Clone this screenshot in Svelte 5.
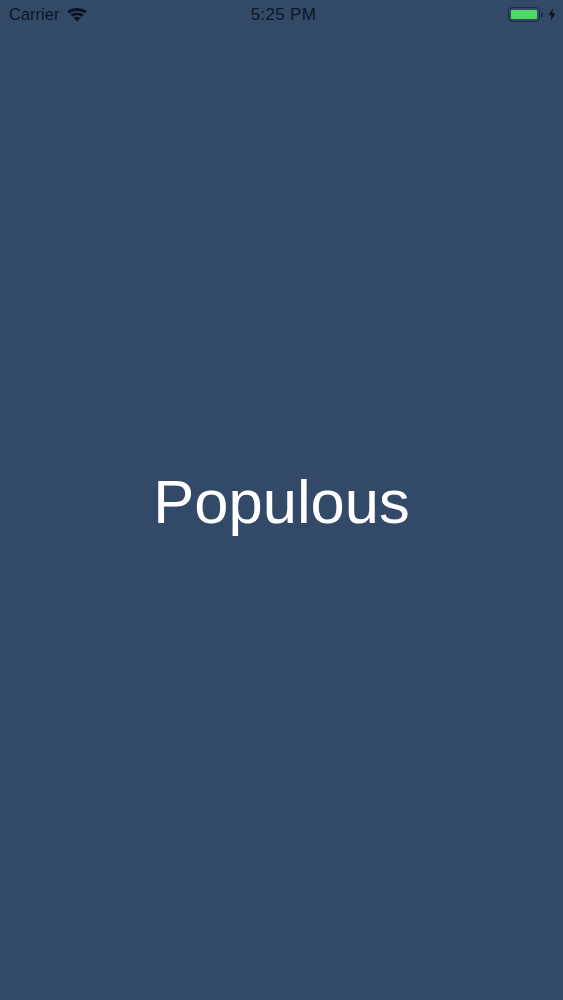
<script>
    let carrier = 'Carrier';
    let time = '5:25 PM';
    let title = 'Populous';
</script>

<div class="screen">
    <header class="status-bar">
        <div class="left">
            <span class="carrier">{carrier}</span>
            <svg class="wifi" width="20" height="14" viewBox="0 0 20 14">
                <path d="M10 13.6 L6.7 10 C8.6 8.4 11.4 8.4 13.3 10 Z" />
                <path d="M5.5 8.8 L3.5 6.7 C7.2 3.6 12.8 3.6 16.5 6.7 L14.5 8.8 C11.9 6.6 8.1 6.6 5.5 8.8 Z" />
                <path d="M2.4 5.5 L0.3 3.3 C5.8 -1.1 14.2 -1.1 19.7 3.3 L17.6 5.5 C13.2 2 6.8 2 2.4 5.5 Z" />
            </svg>
        </div>
        <span class="time">{time}</span>
        <div class="right">
            <div class="battery"><div class="level"></div></div>
            <div class="nub"></div>
            <svg class="bolt" width="8" height="13" viewBox="0 0 7 12">
                <path d="M4.4 0 L0.4 6.8 L3 6.8 L2.4 12 L6.6 4.8 L3.9 4.8 Z" />
            </svg>
        </div>
    </header>
    <main class="splash">
        <h1>{title}</h1>
    </main>
</div>

<style>
    :global(body) {
        margin: 0;
        background: #334968;
    }
    .screen {
        height: 100vh;
        display: flex;
        flex-direction: column;
        background: #334968;
        font-family: "Liberation Sans", Arial, sans-serif;
        overflow: hidden;
    }
    .status-bar {
        height: 29px;
        display: grid;
        grid-template-columns: 1fr auto 1fr;
        align-items: center;
        padding: 0 7px 0 9px;
        color: #0c1628;
        font-size: 16.5px;
    }
    .left {
        display: flex;
        align-items: center;
        gap: 8px;
    }
    .wifi {
        fill: #0a1324;
    }
    .time {
        font-size: 17px;
        letter-spacing: 0.3px;
        margin-left: 2px;
    }
    .right {
        display: flex;
        align-items: center;
        justify-content: flex-end;
    }
    .battery {
        width: 32px;
        height: 15px;
        padding: 2px;
        border: 1px solid #1b2c47;
        border-radius: 4px;
        box-sizing: border-box;
        display: flex;
    }
    .level {
        flex: 1;
        background: #4cd964;
        border-radius: 1px;
    }
    .nub {
        width: 2px;
        height: 5px;
        background: #1b2c47;
        margin-left: 1px;
        border-radius: 0 1px 1px 0;
    }
    .bolt {
        fill: #0a1324;
        margin-left: 5px;
    }
    .splash {
        flex: 1;
        display: flex;
        align-items: center;
        justify-content: center;
        padding-bottom: 25px;
    }
    h1 {
        margin: 0;
        color: #fff;
        font-size: 61.5px;
        font-weight: 400;
        line-height: 1.2;
    }
</style>
